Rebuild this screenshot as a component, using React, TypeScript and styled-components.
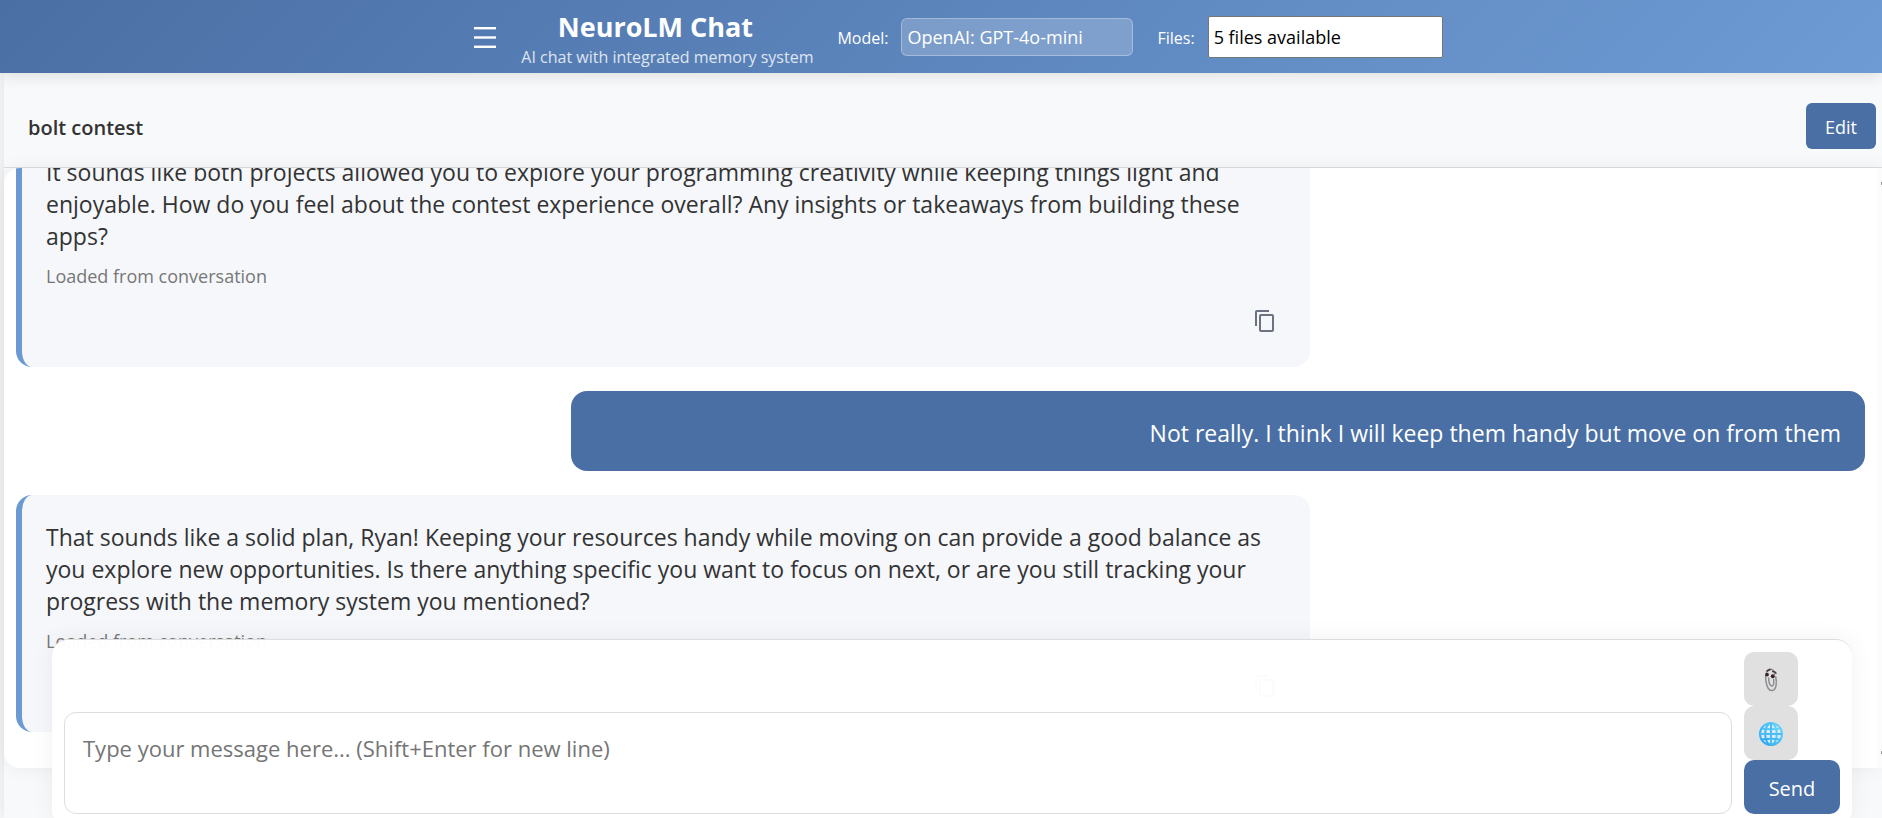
import React from "react";
import styled, { createGlobalStyle } from "styled-components";

const colors = {
  primary: "#4a6fa5",
  accent: "#6b9ad2",
  page: "#f8f9fa",
  text: "#333333",
  muted: "#777777",
  line: "#dddddd",
};

const GlobalStyle = createGlobalStyle`
  *, *::before, *::after { box-sizing: border-box; }
  html, body { margin: 0; padding: 0; }
  body {
    background: ${colors.page};
    color: ${colors.text};
    font-family: "Open Sans", "Noto Sans", sans-serif;
    font-size: 23px;
    overflow: hidden;
  }
  button, input, select, textarea { font-family: inherit; margin: 0; }
`;

const Page = styled.div`
  display: flex;
  flex-direction: column;
  height: 100vh;
  position: relative;
  overflow: hidden;
`;

const TopBar = styled.header`
  display: flex;
  align-items: center;
  justify-content: center;
  height: 73px;
  flex: none;
  padding-left: 35px;
  color: #fff;
  background: linear-gradient(135deg, ${colors.primary}, #6e9bd4);
  box-shadow: 0 2px 15px rgba(0, 0, 0, 0.12);
  z-index: 2;
`;

const MenuButton = styled.button`
  display: flex;
  padding: 2px 0 0;
  margin-right: 24px;
  border: 0;
  background: none;
  color: inherit;
`;

const Brand = styled.div`
  display: flex;
  flex-direction: column;
  align-items: center;
  margin-right: 24px;
  padding-top: 4px;
`;

const BrandName = styled.h1`
  margin: 0;
  padding-right: 24px;
  font-size: 27px;
  line-height: 36px;
  font-weight: 700;
`;

const Tagline = styled.p`
  margin: 0;
  font-size: 16px;
  line-height: 24px;
  opacity: 0.8;
`;

const Field = styled.div`
  display: flex;
  align-items: center;
  gap: 13px;
  margin-right: 24px;
  &:last-child { margin-right: 0; }
`;

const FieldLabel = styled.label`
  padding-top: 2px;
  font-size: 16px;
  line-height: 24px;
`;

const Picker = styled.select<{ $plain?: boolean }>`
  appearance: none;
  width: ${(p) => (p.$plain ? 235 : 232)}px;
  height: ${(p) => (p.$plain ? 42 : 38)}px;
  padding: 0 5px;
  border: 1px solid ${(p) => (p.$plain ? "#767676" : "rgba(255, 255, 255, 0.3)")};
  border-radius: ${(p) => (p.$plain ? 2 : 6)}px;
  background: ${(p) => (p.$plain ? "#fff" : "rgba(255, 255, 255, 0.2)")};
  color: ${(p) => (p.$plain ? "#000" : "#fff")};
  font-size: 18px;
`;

const Chat = styled.main`
  display: flex;
  flex-direction: column;
  flex: 1;
  min-height: 0;
  margin-left: 4px;
  padding-bottom: 50px;
  box-shadow: 0 0 20px rgba(0, 0, 0, 0.1);
`;

const ChatHeader = styled.div`
  display: flex;
  align-items: center;
  justify-content: space-between;
  height: 95px;
  flex: none;
  padding: 12px 6px 0 24px;
  background: ${colors.page};
  border-bottom: 1px solid ${colors.line};
`;

const ChatTitle = styled.h2`
  margin: 0;
  padding-top: 4px;
  font-size: 20px;
  line-height: 32px;
  font-weight: 600;
`;

const EditButton = styled.button`
  height: 46px;
  padding: 2px 19px 0;
  border: 0;
  border-radius: 6px;
  background: ${colors.primary};
  color: #fff;
  font-size: 18px;
`;

const Panel = styled.section`
  display: flex;
  flex: 1;
  min-height: 0;
  overflow: hidden;
  background: #fff;
  border-radius: 16px 0 0 16px;
  box-shadow: 0 0 20px rgba(0, 0, 0, 0.06);
`;

const Messages = styled.div`
  display: flex;
  flex-direction: column;
  justify-content: flex-end;
  gap: 24px;
  flex: 1;
  min-width: 0;
  padding: 0 12px 36px;
`;

const Rail = styled.div`
  display: flex;
  flex-direction: column;
  justify-content: space-between;
  align-items: flex-end;
  width: 5px;
  padding: 14px 0;
  background: #fcfcfc;
`;

const RailMark = styled.span`
  width: 1px;
  height: 3px;
  background: #999;
`;

const Bubble = styled.article<{ $mine?: boolean }>`
  flex: none;
  width: 70%;
  align-self: ${(p) => (p.$mine ? "flex-end" : "flex-start")};
  padding: 26px 24px 22px;
  border-radius: 16px;
  border-left: ${(p) => (p.$mine ? "0" : `6px solid ${colors.accent}`)};
  background: ${(p) => (p.$mine ? colors.primary : "#f5f7fb")};
  color: ${(p) => (p.$mine ? "#fff" : colors.text)};
  text-align: ${(p) => (p.$mine ? "right" : "left")};
`;

const BubbleText = styled.p`
  margin: 0;
  line-height: 32px;
`;

const Meta = styled.div`
  margin-top: 9px;
  font-size: 18px;
  line-height: 30px;
  color: ${colors.muted};
`;

const Actions = styled.div`
  display: flex;
  justify-content: flex-end;
  padding: 18px 5px 12px;
`;

const CopyButton = styled.button`
  display: flex;
  padding: 0 4px;
  border: 0;
  background: none;
  color: #6b7280;
`;

const Composer = styled.form`
  position: absolute;
  left: 52px;
  right: 30px;
  bottom: -8px;
  display: flex;
  align-items: flex-end;
  gap: 12px;
  padding: 12px;
  border-top: 1px solid ${colors.line};
  border-radius: 16px;
  background: rgba(255, 255, 255, 0.98);
  box-shadow: 0 0 24px rgba(0, 0, 0, 0.06);
`;

const MessageBox = styled.textarea`
  flex: 1;
  height: 102px;
  padding: 18px;
  border: 1px solid ${colors.line};
  border-radius: 12px;
  background: #fff;
  color: ${colors.text};
  font-size: 22px;
  line-height: 34px;
  resize: none;
  &::placeholder { color: #757575; opacity: 1; }
`;

const ComposerButtons = styled.div`
  display: flex;
  flex-direction: column;
  width: 96px;
`;

const ToolButton = styled.button`
  display: flex;
  align-items: center;
  justify-content: center;
  width: 54px;
  height: 54px;
  padding: 2px 0 0;
  border: 0;
  border-radius: 10px;
  background: #e0e0e0;
`;

const SendButton = styled.button`
  height: 54px;
  padding: 2px 0 0;
  border: 0;
  border-radius: 10px;
  background: ${colors.primary};
  color: #fff;
  font-size: 20px;
`;

const MenuIcon = () => (
  <svg width="23" height="22" viewBox="0 0 23 22" fill="currentColor" aria-hidden="true">
    <rect x="0" y="0" width="22" height="2.4" />
    <rect x="0" y="9.3" width="22" height="2.4" />
    <rect x="0" y="18.6" width="22" height="2.4" />
  </svg>
);

const CopyIcon = () => (
  <svg width="24" height="24" viewBox="0 0 24 24" fill="currentColor" aria-hidden="true">
    <path d="M16 1H4c-1.100 0-2 .9-2 2v14h2V3h12V1zm3 4H8c-1.100 0-2 .9-2 2v14c0 1.100.9 2 2 2h11c1.100 0 2-.9 2-2V7c0-1.100-.9-2-2-2zm0 16H8V7h11v14z" />
  </svg>
);

const ClipIcon = () => (
  <svg width="24" height="26" viewBox="0 0 24 26" fill="none" aria-hidden="true">
    <path
      d="M7.500 5.200C8.500 3 10 2 12 2.200c2.500.3 3.300 2.300 3.700 5M16.800 10c1.100 5.500.7 13.200-3.600 13.600-4 .4-5.700-4.600-6.400-10.400-.2-1.600-.3-3.200 0-4.700M9.600 11c.2 4.500 1.200 8.200 3.400 8 2-.2 1.900-3.200 1.700-6.400"
      stroke="#8d8d92"
      strokeWidth="1.500"
      strokeLinecap="round"
    />
    <path d="M8 4l3-1.500M13.800 4.600c1.300-.1 2.500.5 3.200 1.600" stroke="#4a3436" strokeWidth="1.500" strokeLinecap="round" />
    <circle cx="8" cy="7.600" r="1.900" fill="#3a2226" />
    <circle cx="13.800" cy="9.300" r="2" fill="#3a2226" />
  </svg>
);

const GlobeIcon = () => (
  <svg width="26" height="26" viewBox="0 0 26 26" fill="none" aria-hidden="true">
    <defs>
      <linearGradient id="globeBlue" x1="1" y1="0" x2="0" y2="1">
        <stop offset="0" stopColor="#6ad8fb" />
        <stop offset="1" stopColor="#2aa3f0" />
      </linearGradient>
    </defs>
    <circle cx="13" cy="13" r="11" fill="#dcecf6" />
    <g stroke="url(#globeBlue)" strokeWidth="2">
      <circle cx="13" cy="13" r="11" />
      <ellipse cx="13" cy="13" rx="5.800" ry="11" />
      <path d="M3.800 7.400c6 1 12.400 1 18.400 0M3.800 18.600c6-1 12.400-1 18.400 0" />
    </g>
    <path d="M2 13h22M13 2v22" stroke="#49bdf6" strokeWidth="2" />
  </svg>
);

const Reply = ({ children }: { children: React.ReactNode }) => (
  <Bubble>
    <BubbleText>{children}</BubbleText>
    <Meta>Loaded from conversation</Meta>
    <Actions>
      <CopyButton type="button" aria-label="Copy message">
        <CopyIcon />
      </CopyButton>
    </Actions>
  </Bubble>
);

export default function App() {
  return (
    <>
      <GlobalStyle />
      <Page>
        <TopBar>
          <MenuButton type="button" aria-label="Open menu">
            <MenuIcon />
          </MenuButton>
          <Brand>
            <BrandName>NeuroLM Chat</BrandName>
            <Tagline>AI chat with integrated memory system</Tagline>
          </Brand>
          <Field>
            <FieldLabel htmlFor="model">Model:</FieldLabel>
            <Picker id="model">
              <option>OpenAI: GPT-4o-mini</option>
            </Picker>
          </Field>
          <Field>
            <FieldLabel htmlFor="files">Files:</FieldLabel>
            <Picker id="files" $plain>
              <option>5 files available</option>
            </Picker>
          </Field>
        </TopBar>
        <Chat>
          <ChatHeader>
            <ChatTitle>bolt contest</ChatTitle>
            <EditButton type="button">Edit</EditButton>
          </ChatHeader>
          <Panel>
            <Messages>
              <Reply>
                It sounds like both projects allowed you to explore your programming creativity while keeping things light
                and enjoyable. How do you feel about the contest experience overall? Any insights or takeaways from
                building these apps?
              </Reply>
              <Bubble $mine>
                <BubbleText>Not really. I think I will keep them handy but move on from them</BubbleText>
              </Bubble>
              <Reply>
                That sounds like a solid plan, Ryan! Keeping your resources handy while moving on can provide a good
                balance as you explore new opportunities. Is there anything specific you want to focus on next, or are
                you still tracking your progress with the memory system you mentioned?
              </Reply>
            </Messages>
            <Rail>
              <RailMark />
              <RailMark />
            </Rail>
          </Panel>
        </Chat>
        <Composer>
          <MessageBox aria-label="Message" placeholder="Type your message here... (Shift+Enter for new line)" />
          <ComposerButtons>
            <ToolButton type="button" aria-label="Attach file">
              <ClipIcon />
            </ToolButton>
            <ToolButton type="button" aria-label="Web search">
              <GlobeIcon />
            </ToolButton>
            <SendButton type="button">Send</SendButton>
          </ComposerButtons>
        </Composer>
      </Page>
    </>
  );
}
